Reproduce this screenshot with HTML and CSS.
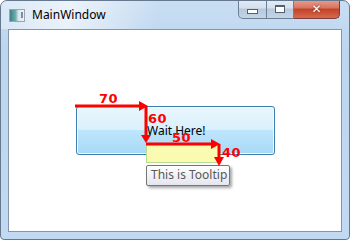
FILE: index.html
```html
<!DOCTYPE html>
<html lang="en">
<head>
  <meta charset="UTF-8" />
  <title>MainWindow</title>
  <link rel="stylesheet" href="styles.css">
</head>
<body>
  <div class="window">
    <div class="titlebar">
      <span class="app-icon"><span class="pane"></span></span>
      <span class="title">MainWindow</span>
      <div class="caption">
        <span class="cbtn min"><i></i></span>
        <span class="cbtn max"><i></i></span>
        <span class="cbtn close">&#x2715;</span>
      </div>
    </div>

    <div class="client">
      <div class="btn">
        <span class="btn-text">Wait Here!</span>
      </div>
      <div class="placement"></div>
      <div class="tooltip">This is Tooltip</div>
    </div>

    <!-- offset annotations -->
    <svg class="marks" width="350" height="240" viewBox="0 0 350 240">
      <g fill="none" stroke="#ff0000" stroke-width="3">
        <path d="M75 106 H141" />
        <path d="M146 106 V137" />
        <path d="M146 144 H212" />
        <path d="M219 144 V159" />
      </g>
      <g fill="#ff0000">
        <polygon points="148,106 139,101 139,111" />
        <polygon points="146,143 141,135 151,135" />
        <polygon points="220,144 211,139 211,149" />
        <polygon points="219,166 214,157 224,157" />
      </g>
      <g class="nums" fill="#ff0000">
        <text x="99" y="103">70</text>
        <text x="148" y="123">60</text>
        <text x="172" y="142">50</text>
        <text x="222" y="157">40</text>
      </g>
    </svg>
  </div>
</body>
</html>
```

FILE: styles.css
```css
body {
  margin: 0;
  background: #ffffff;
  font-family: "Noto Sans", "Open Sans", sans-serif;
}

.window {
  position: relative;
  width: 350px;
  height: 240px;
  box-sizing: border-box;
  border: 1px solid #65788e;
  border-radius: 7px 7px 4px 4px;
  background: linear-gradient(180deg, #c9def3 0%, #bcd6ee 20%, #c2daf1 100%);
  display: flex;
  flex-direction: column;
  overflow: hidden;
}

.titlebar {
  height: 28px;
  display: flex;
  align-items: flex-start;
  position: relative;
  background: linear-gradient(100deg, rgba(255,255,255,0.35) 0%, rgba(255,255,255,0.65) 20%, rgba(255,255,255,0) 45%);
}

.app-icon {
  width: 14px;
  height: 11px;
  margin: 8px 0 0 8px;
  border: 1px solid #9aa5b1;
  background: linear-gradient(90deg, #3d7f8e 0%, #6bb1a5 40%, #d7e6f2 60%, #eef3f8 100%);
  position: relative;
}

.app-icon .pane {
  position: absolute;
  right: 1px;
  top: 2px;
  width: 2px;
  height: 6px;
  background: #7d8b99;
}

.title {
  margin: 6px 0 0 7px;
  font-size: 12px;
  color: #000000;
  line-height: 16px;
}

.caption {
  position: absolute;
  top: -1px;
  right: 9px;
  display: flex;
}

.cbtn {
  height: 19px;
  box-sizing: border-box;
  border: 1px solid #6c7f97;
  border-top: none;
  display: flex;
  align-items: center;
  justify-content: center;
  background: linear-gradient(180deg, #e4ecf6 0%, #d3e0ee 45%, #b6c8dc 50%, #c4d5e6 100%);
}

.cbtn.min {
  width: 29px;
  border-radius: 0 0 0 5px;
}

.cbtn.min i {
  width: 9px;
  height: 3px;
  margin-top: 4px;
  background: #ffffff;
  border: 1px solid #525f6f;
}

.cbtn.max {
  width: 27px;
  border-left: none;
}

.cbtn.max i {
  width: 8px;
  height: 5px;
  border: 1px solid #525f6f;
  border-top-width: 2px;
  background: #ffffff;
  box-shadow: inset 0 0 0 1px #ffffff;
}

.cbtn.close {
  width: 46px;
  border-left: none;
  border-color: #7d3c35;
  border-radius: 0 0 5px 0;
  color: #ffffff;
  font-size: 12px;
  font-weight: 700;
  font-family: "DejaVu Sans", sans-serif;
  text-shadow: 0 0 2px #5a1a12;
  background: linear-gradient(180deg, #e5a090 0%, #d8735f 45%, #c34127 50%, #d56a4f 100%);
}

.client {
  position: relative;
  flex: 1;
  margin: 0 7px 7px 7px;
  background: #ffffff;
  border: 1px solid #8396ad;
}

.btn {
  width: 199px;
  height: 49px;
  box-sizing: border-box;
  margin: 76px 0 0 67px;
  border: 1px solid #3c7fb1;
  border-radius: 3px;
  box-shadow: inset 0 0 0 1px #f6fbfe;
  background: linear-gradient(180deg, #eaf6fd 0%, #d9f0fc 49%, #bee6fd 50%, #a7d9f5 100%);
  position: relative;
}

.btn-text {
  position: absolute;
  left: 70px;
  top: 16px;
  font-size: 12px;
  line-height: 16px;
  color: #000000;
}

.placement {
  position: absolute;
  left: 137px;
  top: 113px;
  width: 74px;
  height: 20px;
  box-sizing: border-box;
  border: 1px solid #b7dc94;
  background: #fafab0;
}

.tooltip {
  position: absolute;
  left: 137px;
  top: 135px;
  width: 84px;
  height: 21px;
  box-sizing: border-box;
  padding: 1px 0 0 4px;
  border: 1px solid #767676;
  border-radius: 2px;
  background: linear-gradient(180deg, #ffffff 0%, #e4e5f0 100%);
  box-shadow: 2px 2px 3px rgba(0, 0, 0, 0.35);
  font-size: 12px;
  line-height: 16px;
  color: #575757;
  white-space: nowrap;
}

.marks {
  position: absolute;
  left: -1px;
  top: -1px;
  pointer-events: none;
}

.nums text {
  font-family: "DejaVu Sans", sans-serif;
  font-weight: 700;
  font-size: 13px;
  letter-spacing: 0.5px;
}
```
